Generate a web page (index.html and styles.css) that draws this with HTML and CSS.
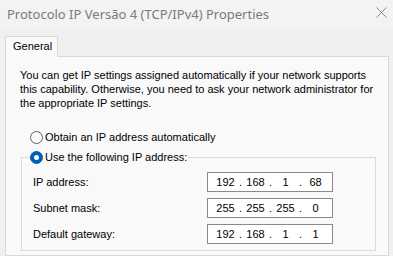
FILE: index.html
```html
<!DOCTYPE html>
<html>
<head>
<meta charset="utf-8">
<link rel="stylesheet" href="styles.css">
</head>
<body>
<div class="window">
  <div class="titlebar">
    <span class="title">Protocolo IP Versão 4 (TCP/IPv4) Properties</span>
    <svg class="close" width="11" height="11" viewBox="0 0 11 11"><path d="M0.5 0.5L10.5 10.5M10.5 0.5L0.5 10.5" stroke="#8a8a8a" stroke-width="1"/></svg>
  </div>
  <div class="tabs"><div class="tab">General</div></div>
  <div class="panel">
    <p class="intro">You can get IP settings assigned automatically if your network supports this capability. Otherwise, you need to ask your network administrator for the appropriate IP settings.</p>
    <div class="option"><span class="radio"></span><span>Obtain an IP address automatically</span></div>
    <fieldset class="group">
      <legend class="option legend"><span class="radio checked"></span><span>Use the following IP address:</span></legend>
      <div class="row"><span class="label">IP address:</span><span class="ipbox"><span class="seg">192</span><span class="dot">.</span><span class="seg">168</span><span class="dot">.</span><span class="seg">1</span><span class="dot">.</span><span class="seg">68</span></span></div>
      <div class="row"><span class="label">Subnet mask:</span><span class="ipbox"><span class="seg">255</span><span class="dot">.</span><span class="seg">255</span><span class="dot">.</span><span class="seg">255</span><span class="dot">.</span><span class="seg">0</span></span></div>
      <div class="row"><span class="label">Default gateway:</span><span class="ipbox"><span class="seg">192</span><span class="dot">.</span><span class="seg">168</span><span class="dot">.</span><span class="seg">1</span><span class="dot">.</span><span class="seg">1</span></span></div>
    </fieldset>
  </div>
</div>
</body>
</html>
```
FILE: styles.css
```css
html, body { margin: 0; padding: 0; }
body {
  width: 393px; height: 256px; overflow: hidden;
  background: #f0f0f0;
  font-family: "Liberation Sans", Arial, sans-serif;
  font-size: 11px; color: #000;
}
.titlebar {
  height: 28px; background: #f3f3f3;
  display: flex; align-items: center; justify-content: space-between;
  padding: 0 6px 0 7px;
}
.title { color: #7a7a7a; font-family: "Noto Sans", sans-serif; font-size: 13px; }
.close { display: block; margin-top: -4px; }
.tabs { padding: 8px 0 0 5px; display: flex; }
.tab {
  position: relative; z-index: 1;
  width: 53px; height: 21px; margin-bottom: -1px; box-sizing: border-box;
  border: 1px solid #d9d9d9; border-bottom: none;
  background: #f9f9f9;
  padding-left: 7px; line-height: 19px;
}
.panel {
  margin: 0 4px 0 5px; height: 200px;
  border: 1px solid #d9d9d9; background: #f9f9f9;
  padding: 11px 0 0 14px; box-sizing: border-box;
}
.intro { margin: 0; line-height: 14px; width: 360px; }
.option { display: flex; align-items: center; gap: 2px; line-height: 14px; }
.panel > .option { margin: 20px 0 0 10px; }
.radio {
  width: 13px; height: 13px; box-sizing: border-box; border-radius: 50%;
  border: 1px solid #5f5f5f; background: #fbfbfb; position: relative;
}
.radio.checked { background: #005fb8; border-color: #005fb8; }
.radio.checked::after {
  content: ""; position: absolute; left: 3px; top: 3px; width: 5px; height: 5px;
  border-radius: 50%; background: #fff;
}
.group {
  margin: 6px 0 0 1px; padding: 0 0 6px 11px; width: 355px; box-sizing: border-box;
  border: 1px solid #dcdcdc; min-width: 0;
}
.legend { padding: 0 1px 0 0; margin-left: -3px; }
.row { display: flex; align-items: center; height: 20px; margin-top: 6px; }
.legend + .row { margin-top: 8px; }
.label { width: 174px; }
.ipbox {
  display: flex; width: 126px; height: 20px; box-sizing: border-box;
  border: 1px solid #8a8a8a; background: #fff; padding-left: 5px; line-height: 18px;
}
.seg { width: 25px; text-align: center; }
.dot { width: 5px; text-align: center; }
```
